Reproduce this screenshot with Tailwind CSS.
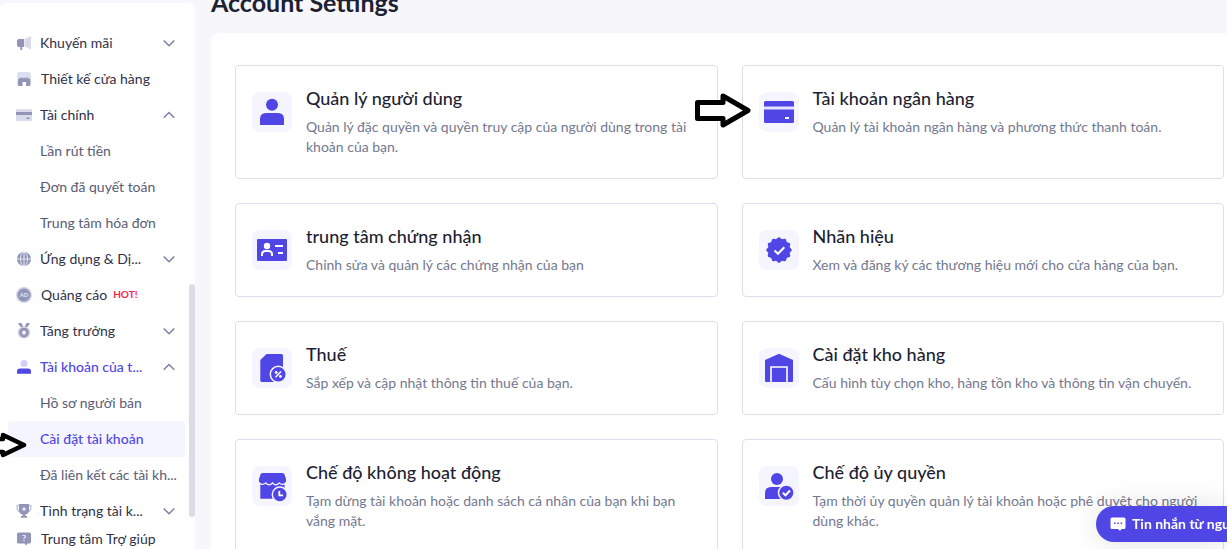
<!DOCTYPE html>
<html lang="vi">
<head>
    <meta charset="UTF-8">
    <meta name="viewport" content="width=device-width, initial-scale=1.0">
    <title>Account Settings</title>
    <script src="https://cdn.jsdelivr.net/npm/@tailwindcss/browser@4"></script>
</head>
<body class="bg-[#f6f6fb] font-[Lato,Roboto,sans-serif] text-[#1d1f33]">
<div class="flex h-screen overflow-hidden">

    <!-- sidebar -->
    <aside class="relative w-[195px] shrink-0 mt-[3px] pt-[22px] bg-white rounded-t-md text-sm text-[#2f3147]">
        <nav class="pl-2 pr-[10px]">
            <button type="button" class="flex items-center w-full h-9 pl-2 pr-[10px] pb-px text-left">
                <svg class="w-4 h-4 mr-2 shrink-0" viewBox="0 0 16 16"><path d="M9 4 15 1V14.500L9 11.500Z" fill="#d9daea"/><path d="M3 4H8.200V12H6.200V15H4.300V12H3Q1 12 1 10.300V5.700Q1 4 3 4Z" fill="#9294b8"/></svg>
                <span class="flex-1">Khuyến mãi</span>
                <svg class="w-3 h-3" viewBox="0 0 12 12" fill="none" stroke="#7d80a3" stroke-width="1.5"><path d="M.7 3.500 6 8.800 11.300 3.500"/></svg>
            </button>
            <a href="#" class="flex items-center h-9 pl-2 pb-px">
                <svg class="w-4 h-4 mr-[9px] shrink-0" viewBox="0 0 16 16"><path d="M3 1H13Q14.500 1 14.700 2.500L15 7H1L1.300 2.500Q1.500 1 3 1Z" fill="#d9dff0"/><path d="M2 7.500Q4 8 5 6 6.500 8.500 8 6 9.500 8.500 11 6 12 8 14.500 7.500V13.500Q14.500 15 13 15H10V11H6.500V15H3Q1.700 15 1.700 13.500Z" fill="#9294b8"/></svg>
                <span>Thiết kế cửa hàng</span>
            </a>
            <button type="button" class="flex items-center w-full h-9 pl-2 pr-[10px] pb-px text-left">
                <svg class="w-4 h-4 mr-2 shrink-0" viewBox="0 0 16 16"><rect y="2" width="16" height="12" rx="1.500" fill="#d9daea"/><path d="M0 5H16V8H0ZM10.500 10.500H13.500V12H10.500Z" fill="#9294b8"/></svg>
                <span class="flex-1">Tài chính</span>
                <svg class="w-3 h-3" viewBox="0 0 12 12" fill="none" stroke="#7d80a3" stroke-width="1.5"><path d="M.7 8.800 6 3.500 11.300 8.800"/></svg>
            </button>
            <a href="#" class="flex items-center h-9 pl-8 pb-px text-[#5a5c74]">Lần rút tiền</a>
            <a href="#" class="flex items-center h-9 pl-8 pb-px text-[#5a5c74]">Đơn đã quyết toán</a>
            <a href="#" class="flex items-center h-9 pl-8 pb-px text-[#5a5c74]">Trung tâm hóa đơn</a>
            <button type="button" class="flex items-center w-full h-9 pl-2 pr-[10px] pb-px text-left">
                <svg class="w-4 h-4 mr-2 shrink-0" viewBox="0 0 16 16"><circle cx="8" cy="8" r="7" fill="#9294b8"/><path d="M8 1V15M1 8H15" stroke="#e4e5f1" fill="none"/><ellipse cx="8" cy="8" rx="3.500" ry="7" fill="none" stroke="#e4e5f1"/></svg>
                <span class="flex-1">Ứng dụng &amp; Dị...</span>
                <svg class="w-3 h-3" viewBox="0 0 12 12" fill="none" stroke="#7d80a3" stroke-width="1.5"><path d="M.7 3.500 6 8.800 11.300 3.500"/></svg>
            </button>
            <a href="#" class="flex items-center h-9 pl-2 pb-px">
                <svg class="w-4 h-4 mr-[9px] shrink-0" viewBox="0 0 16 16"><circle cx="8" cy="8" r="8" fill="#d2d4e4"/><circle cx="8" cy="8" r="6.500" fill="#9294b8"/><text x="8" y="10" text-anchor="middle" font-size="6" font-weight="700" fill="#e4e5f1">AD</text></svg>
                <span>Quảng cáo</span>
                <span class="ml-1.5 text-[10px] font-bold text-[#fb1f47]">HOT!</span>
            </a>
            <button type="button" class="flex items-center w-full h-9 pl-2 pr-[10px] pb-px text-left">
                <svg class="w-4 h-4 mr-2 shrink-0" viewBox="0 0 16 16"><path d="M2 0H5.500L7.500 4H4.500ZM14 0H10.500L8.500 4H11.500Z" fill="#9294b8"/><circle cx="8" cy="9.500" r="6.200" fill="#d2d4e4"/><circle cx="8" cy="9.500" r="4.800" fill="#9294b8"/><path d="M8 6.800 8.800 8.600 10.700 8.700 9.300 10 9.700 11.900 8 11 6.300 11.900 6.700 10 5.300 8.700 7.200 8.600Z" fill="#fff"/></svg>
                <span class="flex-1">Tăng trưởng</span>
                <svg class="w-3 h-3" viewBox="0 0 12 12" fill="none" stroke="#7d80a3" stroke-width="1.5"><path d="M.7 3.500 6 8.800 11.300 3.500"/></svg>
            </button>
            <button type="button" class="flex items-center w-full h-9 pl-2 pr-[10px] pb-px text-left font-medium text-[#5046e5]">
                <svg class="w-4 h-4 mr-2 shrink-0" viewBox="0 0 16 16"><circle cx="8" cy="4.500" r="3.500" fill="#d3d0fa"/><path d="M1 14.700V12.500Q1 9.500 4 9.500H12Q15 9.500 15 12.500V14.700Z" fill="#5046e5"/></svg>
                <span class="flex-1">Tài khoản của t...</span>
                <svg class="w-3 h-3" viewBox="0 0 12 12" fill="none" stroke="#7d80a3" stroke-width="1.5"><path d="M.7 8.800 6 3.500 11.300 8.800"/></svg>
            </button>
            <a href="#" class="flex items-center h-9 pl-8 pb-px text-[#5a5c74]">Hồ sơ người bán</a>
            <a href="#" class="flex items-center h-9 pl-8 pb-px rounded bg-[#f5f5ff] font-medium text-[#5046e5]">Cài đặt tài khoản</a>
            <a href="#" class="flex items-center h-9 pl-8 pb-px whitespace-nowrap text-[#5a5c74]">Đã liên kết các tài kh...</a>
            <button type="button" class="flex items-center w-full h-9 pl-2 pr-[10px] pb-px text-left">
                <svg class="w-4 h-4 mr-2 shrink-0" viewBox="0 0 16 16"><path d="M3.500 2.500H1.200V5Q1.200 8 4 8.500M12.500 2.500H14.800V5Q14.800 8 12 8.500" fill="none" stroke="#c5c7dc" stroke-width="1.500"/><path d="M3 1H13V7Q13 11 9.500 11.300V13H11V14.700H5V13H6.500V11.300Q3 11 3 7Z" fill="#9294b8"/><circle cx="8" cy="6" r="1.800" fill="#e4e5f1"/></svg>
                <span class="flex-1">Tình trạng tài k...</span>
                <svg class="w-3 h-3" viewBox="0 0 12 12" fill="none" stroke="#7d80a3" stroke-width="1.5"><path d="M.7 3.500 6 8.800 11.300 3.500"/></svg>
            </button>
            <a href="#" class="flex items-center h-5 pl-2 pb-px">
                <svg class="w-4 h-4 mr-[9px] shrink-0" viewBox="0 0 16 16"><path d="M2.500 1.500H13.500Q15 1.500 15 3V11Q15 12.500 13.500 12.500H11.500L10 14.500 8.500 12.500H2.500Q1 12.500 1 11V3Q1 1.500 2.500 1.500Z" fill="#9294b8"/><text x="8" y="10" text-anchor="middle" font-size="8" font-weight="700" fill="#fff">?</text></svg>
                <span>Trung tâm Trợ giúp</span>
            </a>
        </nav>
        <div class="absolute right-0 top-[281px] w-1.5 h-[233px] rounded-full bg-[#d9dbe6]"></div>
    </aside>

    <!-- content -->
    <main class="flex-1 min-w-0 ml-4">
        <h1 class="-mt-[14px] mb-[15px] text-[25px] leading-8 font-bold">Account Settings</h1>
        <section class="min-h-full pl-6 pr-[3px] pt-8 bg-white rounded-tl-lg">
            <div class="grid grid-cols-2 gap-6">
                <a href="#" class="flex items-start gap-[14px] px-4 pt-[19px] pb-[21px] border border-[#dcdeee] rounded">
                    <svg class="w-10 h-10 mt-[7px] shrink-0 rounded-lg bg-[#f5f5ff]" viewBox="0 0 40 40" fill="#5046e5"><circle cx="20" cy="12.700" r="6"/><path d="M8 33V27Q8 21 14 21H26Q32 21 32 27V33Z"/></svg>
                    <div>
                        <h2 class="mb-1.5 text-lg leading-[26px] font-medium">Quản lý người dùng</h2>
                        <p class="text-sm text-[#74788f]">Quản lý đặc quyền và quyền truy cập của người dùng trong tài khoản của bạn.</p>
                    </div>
                </a>
                <a href="#" class="flex items-start gap-[14px] px-4 pt-[19px] pb-[21px] border border-[#dcdeee] rounded">
                    <svg class="w-10 h-10 mt-[7px] shrink-0 rounded-lg bg-[#f5f5ff]" viewBox="0 0 40 40" fill="#5046e5"><rect x="5" y="9" width="30" height="22" rx="1.500"/><path d="M5 14.500H35V17.500H5Z" fill="#e3e1fc"/><path d="M26 25H30V27H26Z" fill="#fff"/></svg>
                    <div>
                        <h2 class="mb-1.5 text-lg leading-[26px] font-medium">Tài khoản ngân hàng</h2>
                        <p class="text-sm text-[#74788f]">Quản lý tài khoản ngân hàng và phương thức thanh toán.</p>
                    </div>
                </a>
                <a href="#" class="flex items-start gap-[14px] px-4 pt-[19px] pb-[21px] border border-[#dcdeee] rounded">
                    <svg class="w-10 h-10 mt-[7px] shrink-0 rounded-lg bg-[#f5f5ff]" viewBox="0 0 40 40" fill="#5046e5"><rect x="5" y="9" width="30" height="22" rx="1"/><circle cx="15" cy="16" r="3.200" fill="#fff"/><path d="M10 26V24.500Q10 21 13.500 21H16.500Q20 21 20 24.500V26M23 16H31M26 23H31" fill="none" stroke="#fff" stroke-width="2"/></svg>
                    <div>
                        <h2 class="mb-1.5 text-lg leading-[26px] font-medium">trung tâm chứng nhận</h2>
                        <p class="text-sm text-[#74788f]">Chỉnh sửa và quản lý các chứng nhận của bạn</p>
                    </div>
                </a>
                <a href="#" class="flex items-start gap-[14px] px-4 pt-[19px] pb-[21px] border border-[#dcdeee] rounded">
                    <svg class="w-10 h-10 mt-[7px] shrink-0 rounded-lg bg-[#f5f5ff]" viewBox="0 0 40 40" fill="#5046e5"><rect x="10.500" y="10.500" width="19" height="19" rx="1.800" transform="rotate(15 20 20)"/><rect x="10.500" y="10.500" width="19" height="19" rx="1.800" transform="rotate(45 20 20)"/><rect x="10.500" y="10.500" width="19" height="19" rx="1.800" transform="rotate(75 20 20)"/><path d="M15.500 20.500 19 23.800 25.300 17.300" fill="none" stroke="#fff" stroke-width="2"/></svg>
                    <div>
                        <h2 class="mb-1.5 text-lg leading-[26px] font-medium">Nhãn hiệu</h2>
                        <p class="text-sm text-[#74788f]">Xem và đăng ký các thương hiệu mới cho cửa hàng của bạn.</p>
                    </div>
                </a>
                <a href="#" class="flex items-start gap-[14px] px-4 pt-[19px] pb-[21px] border border-[#dcdeee] rounded">
                    <svg class="w-10 h-10 mt-[7px] shrink-0 rounded-lg bg-[#f5f5ff]" viewBox="0 0 40 40" fill="#5046e5"><path d="M14.500 6H29.500Q31 6 31 7.500V34H10Q8.300 34 8.300 32.500V12Z"/><circle cx="26.300" cy="26.300" r="8" stroke="#f5f5ff" stroke-width="1.500"/><path d="M23.500 29.200 29 23.500" stroke="#fff" stroke-width="1.500"/><circle cx="24.200" cy="24.500" r="1.400" fill="#fff"/><circle cx="28.400" cy="28.400" r="1.400" fill="#fff"/></svg>
                    <div>
                        <h2 class="mb-1.5 text-lg leading-[26px] font-medium">Thuế</h2>
                        <p class="text-sm text-[#74788f]">Sắp xếp và cập nhật thông tin thuế của bạn.</p>
                    </div>
                </a>
                <a href="#" class="flex items-start gap-[14px] px-4 pt-[19px] pb-[21px] border border-[#dcdeee] rounded">
                    <svg class="w-10 h-10 mt-[7px] shrink-0 rounded-lg bg-[#f5f5ff]" viewBox="0 0 40 40" fill="#5046e5"><path d="M20 5.700 34 12V33Q34 34 33 34H7Q6 34 6 33V12Z"/><path d="M12 34.500V19H28V34.500" fill="none" stroke="#fff" stroke-width="1.600"/></svg>
                    <div>
                        <h2 class="mb-1.5 text-lg leading-[26px] font-medium">Cài đặt kho hàng</h2>
                        <p class="text-sm text-[#74788f]">Cấu hình tùy chọn kho, hàng tồn kho và thông tin vận chuyển.</p>
                    </div>
                </a>
                <a href="#" class="flex items-start gap-[14px] px-4 pt-[19px] pb-[21px] border border-[#dcdeee] rounded">
                    <svg class="w-10 h-10 mt-[7px] shrink-0 rounded-lg bg-[#f5f5ff]" viewBox="0 0 40 40" fill="#5046e5"><path d="M8.300 17V32.700H32.500V17Z"/><path d="M7 15Q7 18.300 10.500 18.300 12.500 18.300 13.800 16.800 15.500 18.800 17.200 18.800 19 18.800 20.500 16.800 22 18.800 23.800 18.800 25.500 18.800 27.200 16.800 28.500 18.300 30.500 18.300 34 18.300 34 15" fill="#5046e5" stroke="#f5f5ff" stroke-width="1.200"/><path d="M10.500 7H30.500Q32 7 32.500 8.500L34 13V16H7V13L8.500 8.500Q9 7 10.500 7Z"/><circle cx="27.800" cy="28.500" r="7.500" stroke="#f5f5ff" stroke-width="1.500"/><path d="M27.300 25V29.300H31" fill="none" stroke="#fff" stroke-width="1.800"/></svg>
                    <div>
                        <h2 class="mb-1.5 text-lg leading-[26px] font-medium">Chế độ không hoạt động</h2>
                        <p class="text-sm text-[#74788f]">Tạm dừng tài khoản hoặc danh sách cá nhân của bạn khi bạn vắng mặt.</p>
                    </div>
                </a>
                <a href="#" class="flex items-start gap-[14px] px-4 pt-[19px] pb-[21px] border border-[#dcdeee] rounded">
                    <svg class="w-10 h-10 mt-[7px] shrink-0 rounded-lg bg-[#f5f5ff]" viewBox="0 0 40 40" fill="#5046e5"><circle cx="18" cy="13" r="6"/><path d="M6 33V27Q6 21 12 21H25V33Z"/><circle cx="27.300" cy="26.800" r="7.800" stroke="#f5f5ff" stroke-width="1.500"/><path d="M23.800 26.800 26.500 29.300 31 24.500" fill="none" stroke="#fff" stroke-width="2"/></svg>
                    <div>
                        <h2 class="mb-1.5 text-lg leading-[26px] font-medium">Chế độ ủy quyền</h2>
                        <p class="text-sm text-[#74788f]">Tạm thời ủy quyền quản lý tài khoản hoặc phê duyệt cho người dùng khác.</p>
                    </div>
                </a>
            </div>
        </section>
    </main>
</div>

<!-- pointer arrows -->
<svg class="absolute left-[694px] top-[91px] w-[58px] h-[39px]" viewBox="0 0 58 39" fill="#fff" stroke="#000" stroke-width="5" stroke-linejoin="round"><path d="M3.500 11.500H29V5L54 19.500 29 34V27.500H3.500Z"/></svg>
<svg class="absolute left-0 top-[431px] w-7 h-7" viewBox="0 0 28 28" fill="#fff" stroke="#000" stroke-width="4.500" stroke-linejoin="round"><path d="M-4 8H3V4L24 14 3 24V21H-4Z"/></svg>

<!-- chat -->
<button type="button" class="fixed right-0 bottom-[7px] flex items-center gap-1.5 w-[131px] h-9 pl-[14px] rounded-l-full bg-[#5046e5] shadow-[0_0_30px_rgba(0,0,0,0.12)] text-sm font-bold text-white whitespace-nowrap overflow-hidden">
    <svg class="w-4 h-4 shrink-0" viewBox="0 0 16 16"><path d="M2 1.500H14Q15.500 1.500 15.500 3V11.500Q15.500 13 14 13H11.500L10 15 8 13H2Q.5 13 .5 11.500V3Q.5 1.500 2 1.500Z" fill="#fff"/><path d="M4 6.500H5.500V8H4ZM7.300 6.500H8.800V8H7.300ZM10.600 6.500H12.100V8H10.600Z" fill="#5046e5"/></svg>
    <span>Tin nhắn từ ngư</span>
</button>
</body>
</html>
